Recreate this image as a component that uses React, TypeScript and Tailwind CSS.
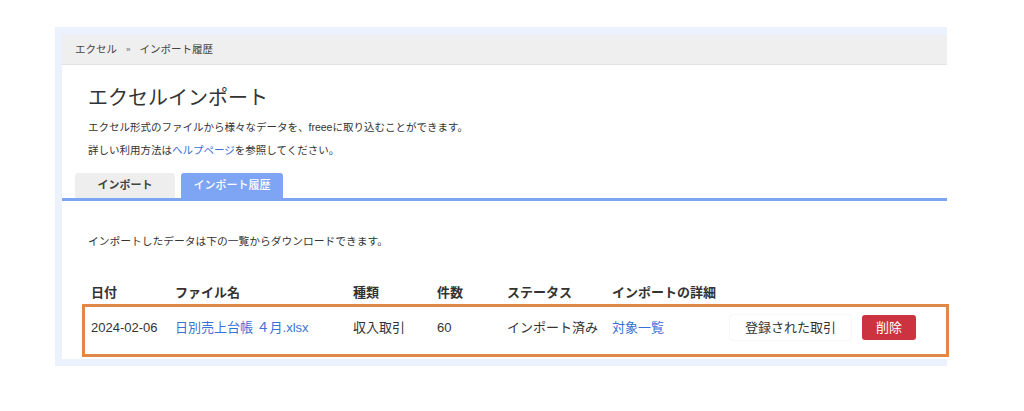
const font = "font-['Liberation_Sans','Noto_Sans_CJK_JP',sans-serif]";

const cols = "grid grid-cols-[84px_178px_84px_70px_105px_118px_auto] items-center";

export default function App() {
  return (
    <div className={`h-[411px] w-[1024px] overflow-hidden bg-white pt-[27px] ${font} text-[#333]`}>
      <div className="ml-[55px] w-[892px] bg-[#ebf1fd] pb-[7px] pl-[7px] pt-[8px]">
        <section className="bg-white pb-[2px]">
          <nav className="flex h-[30px] items-center border-b border-[#e3e3e3] bg-[#efefef] pl-[13px] text-[10.5px] text-[#444]">
            <span>エクセル</span>
            <span className="mx-[9px] text-[8px] text-[#666]">»</span>
            <span>インポート履歴</span>
          </nav>

          <div className="px-[26px] pt-[19px]">
            <h1 className="text-[20px] leading-[28px] text-[#333]">エクセルインポート</h1>
            <p className="mt-[4px] text-[10.5px] leading-[23px]">
              エクセル形式のファイルから様々なデータを、freeeに取り込むことができます。
            </p>
            <p className="text-[10.5px] leading-[23px]">
              詳しい利用方法は<a className="text-[#3a6fd8]">ヘルプページ</a>を参照してください。
            </p>
          </div>

          <div className="mt-[11px] flex gap-[6px] border-b-[3px] border-[#7ea4f4] pl-[13px]">
            <button
              type="button"
              className="h-[25px] w-[100px] rounded-t-[3px] bg-[#efeeee] text-[11px] font-semibold text-[#444]"
            >
              インポート
            </button>
            <button
              type="button"
              className="h-[25px] w-[102px] rounded-t-[3px] bg-[#7ea4f4] text-[11px] font-medium text-white"
            >
              インポート履歴
            </button>
          </div>

          <p className="mt-[30px] pl-[26px] text-[10.75px] leading-[20px]">
            インポートしたデータは下の一覧からダウンロードできます。
          </p>

          <div className={`${cols} ml-[29px] mt-[32px] h-[20px] text-[13px] font-bold text-[#333]`}>
            <span>日付</span>
            <span>ファイル名</span>
            <span>種類</span>
            <span>件数</span>
            <span>ステータス</span>
            <span>インポートの詳細</span>
          </div>

          <div className="-mr-[2px] ml-[20px] mt-[1px] border-[3px] border-[#e0884a] pb-[14px] pl-[6px] pt-[8px] text-[13px]">
            <div className={cols}>
              <span>2024-02-06</span>
              <a className="text-[#3a6fd8]">日別売上台帳 ４月.xlsx</a>
              <span>収入取引</span>
              <span>60</span>
              <span>インポート済み</span>
              <a className="text-[#3a6fd8]">対象一覧</a>
              <div className="flex items-center gap-[11px]">
                <button
                  type="button"
                  className="h-[25px] w-[121px] rounded-[3px] bg-white text-[13px] text-[#333] shadow-[0_0_2px_rgba(0,0,0,0.12)]"
                >
                  登録された取引
                </button>
                <button
                  type="button"
                  className="h-[25px] w-[54px] rounded-[3px] bg-[#cc3340] text-[13px] text-white"
                >
                  削除
                </button>
              </div>
            </div>
          </div>
        </section>
      </div>
    </div>
  );
}
